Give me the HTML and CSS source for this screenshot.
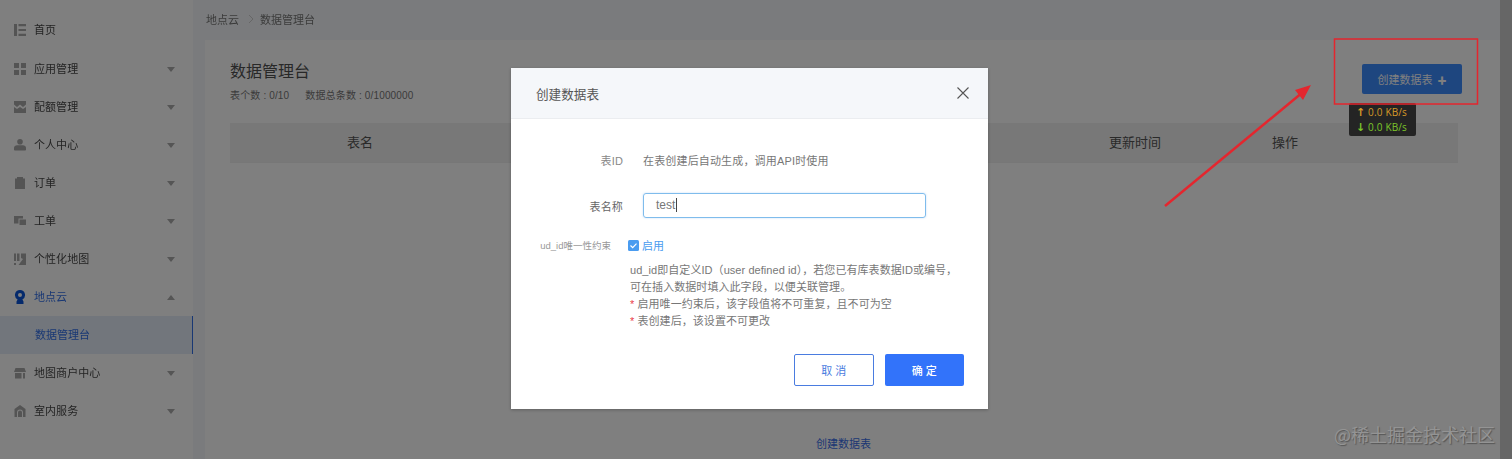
FILE: index.html
```html
<!DOCTYPE html>
<html lang="zh-CN">
<head>
<meta charset="utf-8">
<title>数据管理台</title>
<link rel="stylesheet" href="styles.css">
</head>
<body>
<div class="app">
  <aside class="sidebar">
    <a class="nav-item nav-home"><svg class="ico" viewBox="0 0 12 12"><path d="M0 0h3v12H0zM4.500 0H12v2.200H4.500zM4.500 4.900H12v2.200H4.500zM4.500 9.800H12V12H4.500z"/></svg><span class="nav-label">首页</span></a>
    <a class="nav-item"><svg class="ico" viewBox="0 0 12 12"><path d="M0 0h5v5H0zM7 0h5v5H7zM0 7h5v5H0zM7 7h5v5H7z"/></svg><span class="nav-label">应用管理</span><i class="caret"></i></a>
    <a class="nav-item"><svg class="ico" viewBox="0 0 12 12"><path d="M0 0h12v3.500L9 6 6 3.500 3 6 0 3.500zM0 6l3 2 3-2 3 2 3-2v6H0z"/></svg><span class="nav-label">配额管理</span><i class="caret"></i></a>
    <a class="nav-item"><svg class="ico" viewBox="0 0 12 12"><circle cx="6" cy="2.800" r="2.800"/><path d="M0 9c0-2 1.500-2.800 3-2.800h6c1.500 0 3 .8 3 2.800v1.500c0 .6-.5 1-1 1H1c-.5 0-1-.4-1-1z"/></svg><span class="nav-label">个人中心</span><i class="caret"></i></a>
    <a class="nav-item"><svg class="ico" viewBox="0 0 12 12"><path d="M1 1.500h2V0h6v1.500h2V12H1z"/></svg><span class="nav-label">订单</span><i class="caret"></i></a>
    <a class="nav-item"><svg class="ico" viewBox="0 0 12 12"><path d="M0 1h9v2.500H4.500V8.500H0zM5.500 4.500H12V10H5.500z"/></svg><span class="nav-label">工单</span><i class="caret"></i></a>
    <a class="nav-item"><svg class="ico" viewBox="0 0 12 12"><path d="M0 .5h2v7.500H0zM3 .5h2.500V8L3 8zM7 .5h5V12H4.500L9 6 7 5zM0 10h2v2H0z"/></svg><span class="nav-label">个性化地图</span><i class="caret"></i></a>
    <a class="nav-item nav-open"><svg class="ico ico-pin" viewBox="0 0 12 14"><path fill-rule="evenodd" d="M6 0a5 5 0 0 1 2.400 9.400L9.500 11.500V14h-7v-2.500l1.100-2.100A5 5 0 0 1 6 0zm0 3a2 2 0 1 0 0 4 2 2 0 0 0 0-4z"/></svg><span class="nav-label">地点云</span><i class="caret caret-up"></i></a>
    <a class="nav-sub">数据管理台</a>
    <a class="nav-item"><svg class="ico" viewBox="0 0 12 12"><path d="M1.500 1h9L12 5H0zM1 6h6.500v5.500H1zM9 6h2v5.500H9z"/></svg><span class="nav-label">地图商户中心</span><i class="caret"></i></a>
    <a class="nav-item"><svg class="ico" viewBox="0 0 12 12"><path fill-rule="evenodd" d="M6 0l5.500 4v8h-11V4zM6 4.500A3 3 0 0 0 3 7.500V12h1V7.500a2 2 0 0 1 4 0V12h1V7.500a3 3 0 0 0-3-3z"/><path d="M5 8h2v4H5z"/></svg><span class="nav-label">室内服务</span><i class="caret"></i></a>
  </aside>
  <main class="main">
    <nav class="crumbs"><span>地点云</span><svg class="crumb-sep" viewBox="0 0 6 10"><path d="M1 1l4 4-4 4"/></svg><span>数据管理台</span></nav>
    <section class="card">
      <header class="card-head">
        <div>
          <h1 class="card-title">数据管理台</h1>
          <p class="card-stats"><span>表个数 : 0/10</span><span>数据总条数 : 0/1000000</span></p>
        </div>
        <button class="create-btn">创建数据表 <b>✚</b></button>
      </header>
      <div class="table-head">
        <span class="col-name">表名</span>
        <span class="col-time">更新时间</span>
        <span class="col-op">操作</span>
      </div>
      <a class="empty-link">创建数据表</a>
    </section>
  </main>
  <div class="scrollbar"></div>
</div>
<div class="overlay"></div>

<div class="speed">
  <div class="up"><b>↑</b> 0.0 KB/s</div>
  <div class="down"><b>↓</b> 0.0 KB/s</div>
</div>

<div class="modal">
  <header class="modal-head">
    <span>创建数据表</span>
    <svg class="close" viewBox="0 0 12 12"><path d="M.5.500l11 11M11.500.500l-11 11"/></svg>
  </header>
  <div class="modal-body">
    <div class="row row-id"><label class="lbl">表ID</label><span class="val">在表创建后自动生成，调用API时使用</span></div>
    <div class="row row-name"><label class="lbl lbl-strong">表名称</label><div class="input">test<i class="cursor"></i></div></div>
    <div class="row-ud">
      <label class="lbl-small">ud_id唯一性约束</label>
      <svg class="check" viewBox="0 0 11 11"><rect width="11" height="11" rx="1.500"/><path d="M2.500 5.500l2.200 2.200 3.800-4"/></svg>
      <span class="enable">启用</span>
    </div>
    <div class="help">
      <p>ud_id即自定义ID（user defined id），若您已有库表数据ID或编号，</p>
      <p>可在插入数据时填入此字段，以便关联管理。</p>
      <p><em>*</em> 启用唯一约束后，该字段值将不可重复，且不可为空</p>
      <p><em>*</em> 表创建后，该设置不可更改</p>
    </div>
    <div class="actions">
      <button class="btn btn-ghost">取 消</button>
      <button class="btn btn-primary">确 定</button>
    </div>
  </div>
</div>

<svg class="annotation" viewBox="0 0 1512 459">
  <rect x="1334.500" y="39" width="143" height="65"/>
  <path class="shaft" d="M1165 206L1303 92"/>
  <path class="head" d="M1311 85L1295 90 1303 100z"/>
</svg>

<div class="watermark">@稀土掘金技术社区</div>
</body>
</html>
```

FILE: styles.css
```css
* { box-sizing: border-box; }
html, body { margin: 0; height: 100%; overflow: hidden; }
body {
  position: relative;
  width: 1512px;
  height: 459px;
  font-family: "Liberation Sans", "Noto Sans CJK SC", sans-serif;
  font-size: 12px;
  color: #666;
  background: #fff;
  filter: blur(.3px);
}
p, h1 { margin: 0; }
button { font: inherit; border: 0; padding: 0; }

.app { display: flex; height: 459px; }

/* sidebar */
.sidebar {
  flex: 0 0 193px;
  padding-top: 11px;
  background: #fff;
  color: #484848;
  box-shadow: 1px 0 3px rgba(0, 0, 0, .03);
}
.nav-item {
  display: flex;
  align-items: center;
  height: 38px;
  padding: 0 18px 0 14px;
  line-height: 38px;
  font-size: 11px;
}
.nav-home { margin-bottom: 1px; }
.ico { width: 12px; height: 12px; flex: none; fill: #a8a8a8; margin-right: 8px; }
.ico-pin { height: 14px; }
.nav-label { flex: 1; letter-spacing: .05px; }
.caret {
  width: 0;
  height: 0;
  border-left: 4.500px solid transparent;
  border-right: 4.500px solid transparent;
  border-top: 5px solid #aaa;
}
.caret-up { border-top: 0; border-bottom: 5px solid #aaa; }
.nav-open { color: #3370e8; }
.nav-open .ico { fill: #0a55d8; }
.nav-sub {
  display: block;
  height: 38px;
  padding-left: 35px;
  line-height: 38px;
  font-size: 11px;
  color: #3370e8;
  background: #e4ecf8;
  border-right: 1.500px solid #3370e8;
}

/* main */
.main {
  flex: 1;
  display: flex;
  flex-direction: column;
  min-width: 0;
  background: #f4f7fa;
  padding-left: 12px;
}
.crumbs {
  display: flex;
  align-items: center;
  height: 40px;
  margin-left: 1px;
  color: #777;
  font-size: 11px;
  padding-bottom: 2px;
}
.crumb-sep { width: 6px; height: 10px; margin: 0 6px 0 9px; fill: none; stroke: #ccc; stroke-width: 1; }
.card {
  position: relative;
  flex: 1;
  background: #fff;
  padding: 19px 42px 0 25px;
}
.card-head { display: flex; justify-content: space-between; align-items: flex-start; height: 64px; }
.card-title { font-size: 16px; font-weight: 400; line-height: 25px; color: #505050; }
.card-stats { font-size: 10px; line-height: 22px; color: #777; margin-top: 1px; letter-spacing: .15px; }
.card-stats span { margin-right: 16px; }
.create-btn {
  width: 100px;
  height: 30px;
  margin: 5px -4px 0 0;
  border-radius: 2px;
  background: #3a8bff;
  color: #fff;
  font-size: 11px;
  opacity: .98;
}
.create-btn b { font-size: 9px; margin-left: 2px; }
.table-head {
  position: relative;
  height: 40px;
  line-height: 39px;
  background: #f0f0f0;
  border-bottom: 1px solid #eee;
  font-size: 13px;
  color: #555;
}
.col-name { position: absolute; left: 117px; }
.col-time { position: absolute; left: 879px; }
.col-op { position: absolute; left: 1042px; }
.empty-link {
  position: absolute;
  left: 611px;
  top: 395px;
  font-size: 11px;
  color: #3a6ee8;
}
.scrollbar { flex: 0 0 12px; background: #ccc; }

/* overlay and dialog */
.overlay { position: absolute; inset: 0; background: rgba(0, 0, 0, .5); }
.modal {
  position: absolute;
  left: 511px;
  top: 68px;
  width: 477px;
  height: 341px;
  background: #fff;
  box-shadow: 0 1px 3px rgba(0, 0, 0, .25);
}
.modal-head {
  display: flex;
  align-items: center;
  justify-content: space-between;
  height: 51px;
  padding: 0 19px 0 25px;
  background: #f5f7fa;
  border-bottom: 1px solid #ebedf0;
  font-size: 12.600px;
  color: #555;
}
.close { width: 12px; height: 12px; fill: none; stroke: #555; stroke-width: 1.100; }
.modal-body { padding-top: 30px; }
.row { display: flex; align-items: center; }
.row-id { height: 22px; }
.row-name { height: 25px; margin-top: 22px; }
.lbl { width: 112px; text-align: right; font-size: 11px; color: #888; letter-spacing: .15px; }
.lbl-strong { color: #666; }
.val { margin-left: 20px; font-size: 11px; color: #777; letter-spacing: .16px; }
.input {
  width: 283px;
  height: 25px;
  margin-left: 20px;
  padding-left: 12px;
  border: 1px solid #7fbcec;
  border-radius: 3px;
  line-height: 23px;
  font-size: 12px;
  color: #777;
  box-shadow: 0 0 2px rgba(70, 150, 230, .35);
}
.cursor { display: inline-block; width: 1px; height: 14px; margin-left: 1px; background: #444; vertical-align: -3px; }
.row-ud { display: flex; align-items: center; height: 12px; margin-top: 21px; }
.lbl-small { width: 100px; text-align: right; font-size: 9.500px; color: #999; }
.check { width: 11px; height: 11px; margin-left: 17px; }
.check rect { fill: #4a9cf0; }
.check path { fill: none; stroke: #fff; stroke-width: 1.200; }
.enable { margin-left: 3px; font-size: 11px; color: #4a9cf0; }
.help {
  margin: 11px 0 0 119px;
  font-size: 11px;
  line-height: 17px;
  color: #777;
  letter-spacing: .06px;
}
.help em { font-style: normal; color: #ea3d4a; }
.actions { display: flex; justify-content: flex-end; gap: 11px; margin-top: 24px; padding-right: 24px; }
.btn { width: 79.500px; height: 32px; border-radius: 2px; font-size: 11px; }
.btn-ghost { background: #fff; border: 1px solid #4a7ce0; color: #4a7ce0; }
.btn-primary { background: #3273fa; color: #fff; font-weight: 500; }

/* floating bits */
.speed {
  position: absolute;
  left: 1349px;
  top: 103px;
  width: 67px;
  height: 33px;
  padding: 2px 0 0 7px;
  border-radius: 2px;
  background: #242424;
  font-family: "Open Sans", sans-serif;
  font-size: 10px;
  line-height: 15px;
  letter-spacing: .15px;
  white-space: nowrap;
}
.speed b { font-family: "DejaVu Sans", sans-serif; font-size: 11px; font-weight: 700; }
.up { color: #d89a28; }
.down { color: #7cc52a; }
.annotation { position: absolute; inset: 0; width: 1512px; height: 459px; pointer-events: none; }
.annotation rect { fill: none; stroke: #e4262e; stroke-width: 1.500; }
.annotation .shaft { stroke: #e4262e; stroke-width: 2.500; fill: none; }
.annotation .head { fill: #e4262e; }
.watermark {
  position: absolute;
  right: 17px;
  bottom: 13px;
  font-family: "Noto Sans CJK SC", sans-serif;
  font-size: 18px;
  line-height: 24px;
  color: #949494;
  text-shadow: 1px 1px 1px #555;
}
```
